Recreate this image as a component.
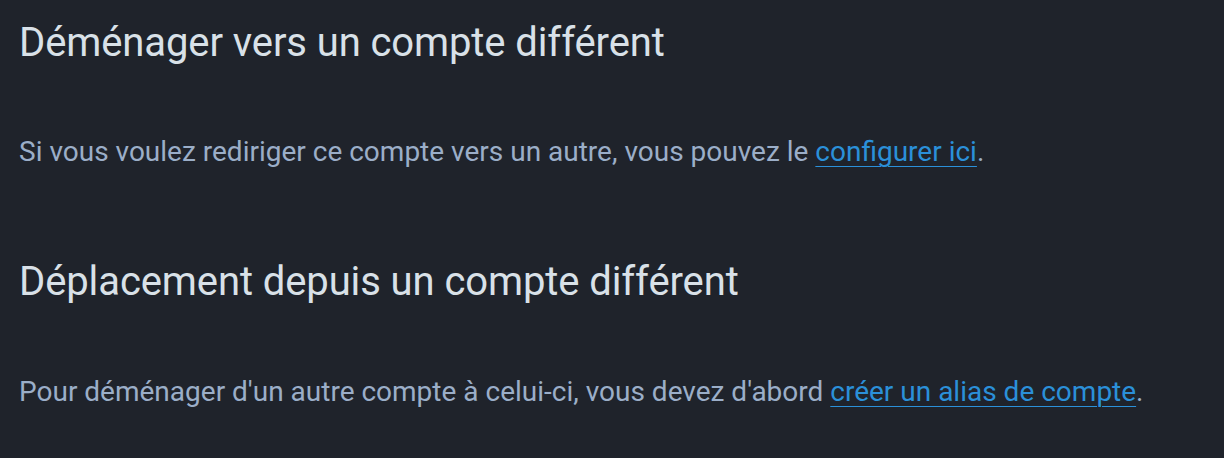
export default function App() {
  return (
    <div className="min-h-[458px] bg-[#1f232b] px-[19px] pt-[19px] font-['Roboto',sans-serif]">
      <h3 className="text-[40px] leading-[48px] tracking-[-0.1px] text-[#d9e1e8]">Déménager vers un compte différent</h3>
      <p className="mt-[65px] text-[28px] leading-[40px] text-[#9baec8]">
        Si vous voulez rediriger ce compte vers un autre, vous pouvez le{' '}
        <a href="#" className="text-[#2b90d9] underline decoration-1 underline-offset-[5px]">configurer ici</a>.
      </p>
      <h3 className="mt-[86px] text-[40px] leading-[48px] tracking-[-0.1px] text-[#d9e1e8]">Déplacement depuis un compte différent</h3>
      <p className="mt-[66px] text-[28px] leading-[40px] text-[#9baec8]">
        Pour déménager d'un autre compte à celui-ci, vous devez d'abord{' '}
        <a href="#" className="text-[#2b90d9] underline decoration-1 underline-offset-[5px]">créer un alias de compte</a>.
      </p>
    </div>
  );
}
